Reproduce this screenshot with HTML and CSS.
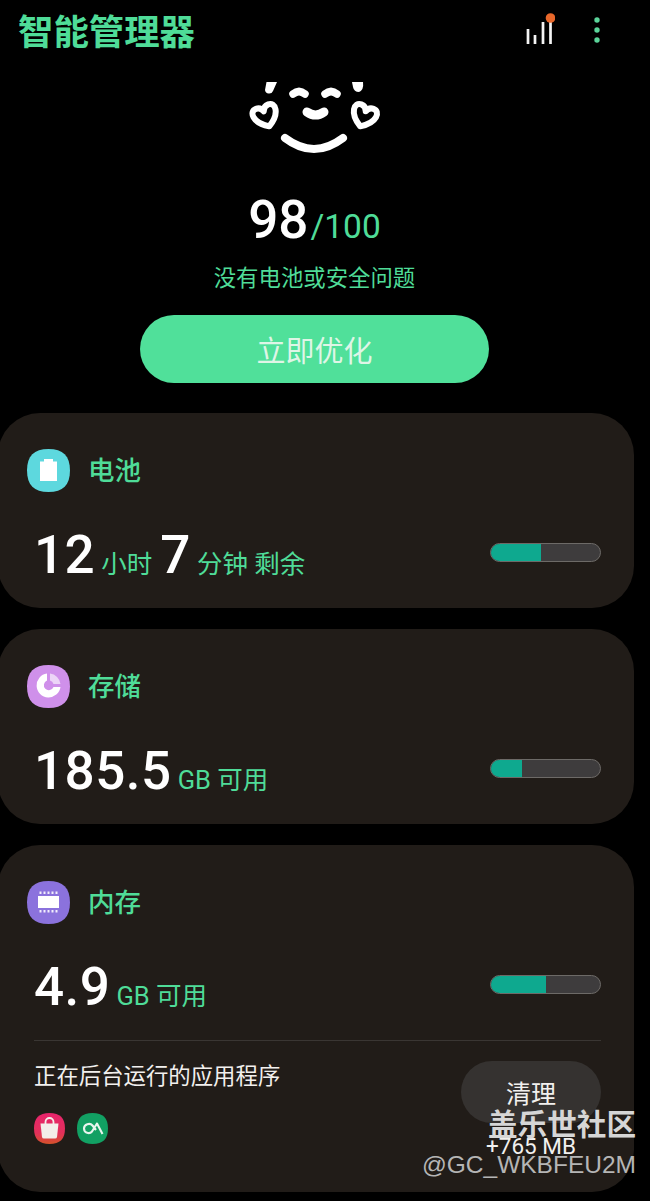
FILE: index.html
```html
<!DOCTYPE html>
<html lang="zh-CN">
<head>
<meta charset="UTF-8">
<meta name="viewport" content="width=device-width, initial-scale=1.0">
<title>智能管理器</title>
<link rel="stylesheet" href="styles.css">
</head>
<body>
<div class="page">
  <header class="topbar">
    <h1 class="app-title">智能管理器</h1>
    <div class="top-actions">
      <svg class="signal" width="30" height="34" viewBox="0 0 30 34">
        <path d="M3 16v15M10 22v9M18 9v22M25.500 5v26" stroke="#f4f4f4" stroke-width="2.700" fill="none"/>
        <circle cx="25.500" cy="5" r="4.800" fill="#e8672a"/>
      </svg>
      <svg class="more" width="8" height="28" viewBox="0 0 8 28">
        <circle cx="4" cy="4" r="2.700" fill="#5bd49a"/>
        <circle cx="4" cy="14" r="2.700" fill="#5bd49a"/>
        <circle cx="4" cy="24" r="2.700" fill="#5bd49a"/>
      </svg>
    </div>
  </header>

  <section class="summary">
    <svg class="face" width="140" height="78" viewBox="0 0 140 78">
      <path d="M21.500 0H32L28 9A4.200 4.200 0 0 1 20 8Z" fill="#fff"/>
      <path d="M107 0H118Q119 8 114 10Q109 10 108 5Z" fill="#fff"/>
      <path d="M48 12Q54 7 60 12M80 12Q86 7 92 12" stroke="#fff" stroke-width="7.500" stroke-linecap="round" fill="none"/>
      <path d="M62 30Q70.500 36 79 30" stroke="#fff" stroke-width="9" stroke-linecap="round" fill="none"/>
      <path d="M40 56Q69 78 98 56" stroke="#fff" stroke-width="8" stroke-linecap="round" fill="none"/>
      <path class="heart" transform="translate(20.500 34) rotate(-20)" d="M0 11C-15 2-14-10-6.500-10C-3-10-1-8 0-5C1-8 3-10 6.500-10C14-10 15 2 0 11Z"/>
      <path class="heart" transform="translate(119 34) rotate(20)" d="M0 11C-15 2-14-10-6.500-10C-3-10-1-8 0-5C1-8 3-10 6.500-10C14-10 15 2 0 11Z"/>
    </svg>
    <div class="score"><span class="score-num">98</span><span class="score-max">/100</span></div>
    <p class="status">没有电池或安全问题</p>
    <button class="optimize">立即优化</button>
  </section>

  <section class="card">
    <div class="card-head">
      <svg class="card-icon" width="43" height="43" viewBox="0 0 43 43">
        <path d="M21.500 0C36 0 43 7 43 21.500S36 43 21.500 43S0 36 0 21.500S7 0 21.500 0Z" fill="#5dd8de"/>
        <path d="M17 10h9v2.500h4V32h-17V12.500h4Z" fill="#fff"/>
      </svg>
      <h2 class="card-title">电池</h2>
    </div>
    <div class="card-row">
      <div class="value"><b>12</b><span>小时</span><b>7</b><span>分钟 剩余</span></div>
      <div class="bar"><div class="bar-fill" style="width: 46%"></div></div>
    </div>
  </section>

  <section class="card">
    <div class="card-head">
      <svg class="card-icon" width="43" height="43" viewBox="0 0 43 43">
        <path d="M21.500 0C36 0 43 7 43 21.500S36 43 21.500 43S0 36 0 21.500S7 0 21.500 0Z" fill="#cf90ea"/>
        <path d="M20 8.500A12 12 0 1 0 33.500 22H26.500A5 5 0 1 1 20 15.500Z" fill="#fff"/>
        <path d="M23 8.500A12 12 0 0 1 33.500 19H26.500A5 5 0 0 0 23 15.500Z" fill="#ecd4f7"/>
      </svg>
      <h2 class="card-title">存储</h2>
    </div>
    <div class="card-row">
      <div class="value"><b>185.5</b><span>GB 可用</span></div>
      <div class="bar"><div class="bar-fill" style="width: 28%"></div></div>
    </div>
  </section>

  <section class="card">
    <div class="card-head">
      <svg class="card-icon" width="43" height="43" viewBox="0 0 43 43">
        <path d="M21.500 0C36 0 43 7 43 21.500S36 43 21.500 43S0 36 0 21.500S7 0 21.500 0Z" fill="#8b72dd"/>
        <rect x="11" y="15" width="21" height="12" fill="#fff"/>
        <path d="M13.500 10.500v2.500M17.500 10.500v2.500M21.500 10.500v2.500M25.500 10.500v2.500M29.500 10.500v2.500M13.500 29v2.500M17.500 29v2.500M21.500 29v2.500M25.500 29v2.500M29.500 29v2.500" stroke="#f2eefc" stroke-width="2" fill="none"/>
      </svg>
      <h2 class="card-title">内存</h2>
    </div>
    <div class="card-row">
      <div class="value"><b>4.9</b><span>GB 可用</span></div>
      <div class="bar"><div class="bar-fill" style="width: 50%"></div></div>
    </div>
    <div class="background">
      <div class="background-apps">
        <p class="background-label">正在后台运行的应用程序</p>
        <div class="app-icons">
          <svg width="31" height="31" viewBox="0 0 31 31">
            <defs>
              <linearGradient id="shopBg" x1="0" y1="0" x2="0" y2="1">
                <stop offset="0" stop-color="#e8246c"/>
                <stop offset="0.650" stop-color="#e2305a"/>
                <stop offset="1" stop-color="#d4522a"/>
              </linearGradient>
            </defs>
            <path d="M15.500 0C26 0 31 5 31 15.500S26 31 15.500 31S0 26 0 15.500S5 0 15.500 0Z" fill="url(#shopBg)"/>
            <path d="M6.500 10.500H24.500L23 24Q22.800 25.500 21 25.500H10Q8.200 25.500 8 24Z" fill="#f3eeea"/>
            <path d="M11.500 11V9A4 4 0 0 1 19.500 9V11" stroke="#f3eeea" stroke-width="1.800" fill="none"/>
          </svg>
          <svg width="31" height="31" viewBox="0 0 31 31">
            <path d="M15.500 0C26 0 31 5 31 15.500S26 31 15.500 31S0 26 0 15.500S5 0 15.500 0Z" fill="#12a063"/>
            <path d="M25.500 21L20 10.500L15 18.500C12.500 21.500 7 20 7 15.500C7 11 13 9.500 15.500 12.500L19 17" stroke="#e8f5ee" stroke-width="2.100" stroke-linejoin="round" fill="none"/>
          </svg>
        </div>
      </div>
      <div class="clean">
        <button class="clean-btn">清理</button>
        <span class="clean-size">+765 MB</span>
      </div>
    </div>
  </section>

  <div class="watermark">
    <div class="watermark-name">盖乐世社区</div>
    <div class="watermark-id">@GC_WKBFEU2M</div>
  </div>
</div>
</body>
</html>
```

FILE: styles.css
```css
* {
  box-sizing: border-box;
}
html, body {
  margin: 0;
  background-color: #000;
}
body {
  font-family: Roboto, "Noto Sans CJK SC", sans-serif;
  color: #fff;
  overflow: hidden;
}
.page {
  position: relative;
  width: 650px;
  height: 1201px;
  overflow: hidden;
}
.topbar {
  display: flex;
  justify-content: space-between;
  align-items: center;
  height: 64px;
  padding: 0 49px 0 18px;
}
.app-title {
  margin: 0 0 6px;
  font-size: 35.4px;
  font-weight: 700;
  color: #4fdc98;
}
.top-actions {
  display: flex;
  align-items: center;
  gap: 38px;
  margin-bottom: 4px;
}
.summary {
  display: flex;
  flex-direction: column;
  align-items: center;
  padding: 18px 21px 0 0;
}
.face {
  display: block;
}
.score {
  display: flex;
  align-items: baseline;
  margin-top: 31px;
  line-height: 58px;
}
.score-num {
  font-size: 53px;
  font-weight: 500;
}
.score-max {
  font-size: 33.5px;
  color: #4fdc98;
  margin-left: 2px;
}
.status {
  margin: 6px 0 0;
  font-size: 22.4px;
  line-height: 32px;
  color: #4fdc98;
}
.optimize {
  width: 349px;
  height: 68px;
  margin-top: 21px;
  border: 0;
  border-radius: 34px;
  background: #50e09a;
  color: #dff5e6;
  font-family: inherit;
  font-size: 29px;
}
.card {
  width: 636px;
  height: 195px;
  margin: 0 0 21px -2px;
  padding: 36px 33px 0 36px;
  background: #211c18;
  border-radius: 42px;
}
.summary + .card {
  margin-top: 30px;
}
.card:last-of-type {
  height: 347px;
}
.card-head {
  display: flex;
  align-items: center;
  gap: 18px;
  margin-left: -7px;
}
.card-icon {
  display: block;
  flex: none;
}
.card-title {
  margin: 0 0 4px;
  font-size: 26.5px;
  font-weight: 500;
  color: #4fdc98;
}
.card-row {
  display: flex;
  justify-content: space-between;
  align-items: center;
  margin-top: 32px;
}
.value {
  display: flex;
  align-items: baseline;
  height: 62px;
  line-height: 62px;
}
.value b {
  font-size: 53px;
  font-weight: 500;
  letter-spacing: 0.5px;
}
.value span {
  margin: 0 8px 0 6px;
  font-size: 25.5px;
  color: #4fdc98;
}
.bar {
  width: 111px;
  height: 19px;
  margin-bottom: 5px;
  border: 1px solid #6d6a67;
  border-radius: 10px;
  background: #3e3c3d;
  overflow: hidden;
}
.bar-fill {
  height: 100%;
  background: #0ea98f;
}
.background {
  display: flex;
  justify-content: space-between;
  margin-top: 22px;
  padding-top: 20px;
  border-top: 1px solid #3a3633;
}
.background-label {
  margin: 0;
  font-size: 22.4px;
  line-height: 30px;
  color: #f2f0ee;
}
.app-icons {
  display: flex;
  gap: 12px;
  margin-top: 22px;
}
.app-icons svg {
  display: block;
}
.clean {
  display: flex;
  flex-direction: column;
  align-items: center;
  width: 140px;
}
.clean-btn {
  width: 140px;
  height: 62px;
  border: 0;
  border-radius: 31px;
  background: #353230;
  color: #f2f0ee;
  font-family: inherit;
  font-size: 25px;
  padding: 0;
}
.clean-size {
  margin-top: 8px;
  font-size: 22.5px;
  line-height: 30px;
  color: #f2f0ee;
}
.watermark {
  position: absolute;
  right: 14px;
  top: 1105px;
  text-align: right;
}
.watermark-name {
  font-size: 29.6px;
  font-weight: 700;
  line-height: 40px;
  color: #d6d6d6;
}
.watermark-id {
  margin-top: 3px;
  font-family: "Liberation Sans", sans-serif;
  font-size: 24.5px;
  line-height: 34px;
  color: #b5b5b5;
}
.heart {
  fill: none;
  stroke: #fff;
  stroke-width: 6;
  stroke-linejoin: round;
}
```
